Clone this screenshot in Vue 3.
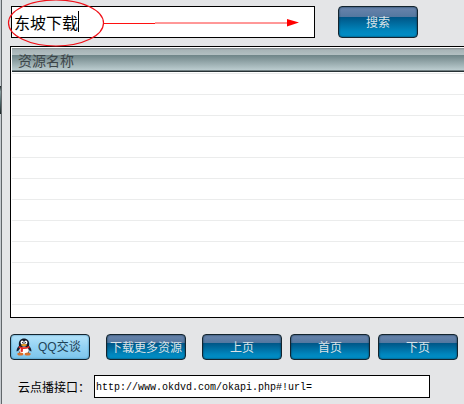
<script setup>
import { ref } from 'vue'

const keyword = ref('东坡下载')
const apiUrl = ref('http://www.okdvd.com/okapi.php#!url=')

const rows = 12
const pageButtons = ['上页', '首页', '下页']
</script>

<template>
  <div class="window">
    <div class="edge"><span class="edge-mark"></span></div>

    <div class="content">
      <!-- Search -->
      <form class="search-bar" @submit.prevent>
        <input v-model="keyword" class="search-input" type="text" aria-label="搜索" />
        <button class="btn btn-search" type="submit">搜索</button>
        <svg class="mark" width="310" height="50" viewBox="0 0 310 50" fill="none">
          <ellipse cx="56" cy="23" rx="47.5" ry="23" stroke="#f01018" stroke-width="1.2" />
          <path d="M104 23.5H155" stroke="#ff1010" stroke-width="1" />
          <path d="M155 23H290" stroke="#ff3030" stroke-width="1" />
          <path d="M287 19L299 22.5L287 26.5Z" fill="#f00" />
          <path d="M78.5 11V32" stroke="#000" stroke-width="1" />
        </svg>
      </form>

      <!-- Results -->
      <div class="list">
        <table class="list-table">
          <thead>
            <tr><th>资源名称</th></tr>
          </thead>
          <tbody>
            <tr v-for="n in rows" :key="n"><td></td></tr>
          </tbody>
        </table>
      </div>

      <!-- Actions -->
      <div class="actions">
        <button class="btn btn-qq" type="button">
          <svg class="penguin" width="16" height="18" viewBox="0 0 16 18">
            <path d="M3 8C1.5 9 .3 11.5 .6 13.5C1.5 13.5 2 12.5 2.5 12L3.5 15H12.5L13.5 12C14 12.5 14.5 13.5 15.4 13.5C15.7 11.5 14.5 9 13 8Z" fill="#172032" />
            <path d="M3 8C2 2.5 5 .5 8 .5S14 2.5 13 8L12 9H4Z" fill="#101624" />
            <ellipse cx="8" cy="12.5" rx="4.8" ry="4" fill="#fff" />
            <ellipse cx="6.2" cy="4.5" rx="1.6" ry="2" fill="#fff" />
            <ellipse cx="9.8" cy="4.5" rx="1.6" ry="2" fill="#fff" />
            <circle cx="6.7" cy="4.7" r=".6" fill="#000" />
            <circle cx="9.3" cy="4.7" r=".6" fill="#000" />
            <ellipse cx="8" cy="7" rx="3" ry="1" fill="#f5a623" />
            <path d="M3 8Q8 10.5 13 8L13.5 9.7Q10 11.3 7 11L6.7 14L4.5 13.7L4.8 10.5L2.6 9.7Z" fill="#e22a22" />
            <ellipse cx="4.4" cy="16" rx="3" ry="1.5" fill="#d9702a" />
            <ellipse cx="11.6" cy="16" rx="3" ry="1.5" fill="#d9702a" />
          </svg>
          <span>QQ交谈</span>
        </button>
        <button class="btn" type="button">下载更多资源</button>
        <div class="pager">
          <button v-for="label in pageButtons" :key="label" class="btn" type="button">{{ label }}</button>
        </div>
      </div>

      <!-- Play API -->
      <div class="api-bar">
        <label for="api-url">云点播接口：</label>
        <input id="api-url" v-model="apiUrl" class="api-input" type="text" />
      </div>
    </div>
  </div>
</template>

<style>
body {
  background: #e4e5e7;
}
</style>

<style scoped>
.window {
  display: flex;
  min-height: 100vh;
  overflow: hidden;
  background: #e4e5e7;
  color: #000;
  font-family: 'Liberation Sans', 'Noto Sans CJK SC', sans-serif;
  font-size: 12px;
}

.edge {
  box-sizing: border-box;
  width: 2px;
  padding-top: 86px;
  background: #c6cbd0;
  border-right: 1px solid #62676b;
}

.edge-mark {
  display: block;
  height: 28px;
  background: linear-gradient(#1c2426, #8a9c9f 20%, #4b6468 60%, #1c2426);
}

.content {
  flex: 1;
  min-width: 0;
  padding: 6px 0 6px 8px;
}

.search-bar {
  position: relative;
  display: flex;
  gap: 23px;
  padding: 0 46px 0 1px;
}

input {
  box-sizing: border-box;
  min-width: 0;
  margin: 0;
  background: #fff;
  border: 1px solid #000;
  border-radius: 0;
  color: #000;
  outline: none;
}

.search-input {
  flex: 1;
  height: 32px;
  padding: 0 2px;
  font-family: 'Liberation Sans', 'Noto Sans CJK SC', sans-serif;
  font-size: 16px;
}

/* hand-drawn hint over the search box */
.mark {
  position: absolute;
  top: -6px;
  left: -10px;
  pointer-events: none;
}

.btn {
  box-sizing: border-box;
  flex-shrink: 0;
  width: 80px;
  height: 26px;
  padding: 0;
  border: 1px solid #14242e;
  border-radius: 4px;
  background: linear-gradient(#6a84ac, #53779f 34%, #005788 35%, #0086bd 80%, #0090c8);
  box-shadow: inset 0 0 2px #062a40;
  color: #dce3e8;
  font-family: 'Liberation Sans', 'Noto Sans CJK SC', sans-serif;
  font-size: 12px;
  line-height: 26px;
  white-space: nowrap;
  cursor: pointer;
}

.btn-search {
  height: 32px;
  line-height: 32px;
}

.list {
  margin-top: 8px;
  padding: 1px 0 0 1px;
  background: #fff;
  border: 1px solid #000;
  border-right: none;
}

.list-table {
  width: 100%;
  border-spacing: 0;
}

.list-table th {
  box-sizing: border-box;
  height: 25px;
  padding: 2px 6px 0;
  background: linear-gradient(#858c8e, #a7b4b7 2px, #b3c0c2 7px, #6e8487 7px, #93a6a9 14px, #bbcccf 22px, #263134 23px) padding-box;
  border-bottom: 1px solid #fff;
  color: #3c4548;
  font-size: 14px;
  font-weight: 400;
  line-height: 22px;
  text-align: left;
}

.list-table td {
  box-sizing: border-box;
  height: 21px;
  padding: 0;
  border-top: 1px solid #ebecec;
}

.list-table tr:last-child td {
  height: 13px;
}

.actions {
  display: flex;
  gap: 16px;
  margin-top: 16px;
}

.pager {
  display: flex;
  gap: 8px;
}

.btn-qq {
  display: flex;
  align-items: center;
  gap: 6px;
  padding-left: 5px;
  background: linear-gradient(#b5e3fa, #93d2f3 50%, #7cc5ec);
  box-shadow: inset 0 0 2px #1f6f9c;
  color: #1f4358;
}

.penguin {
  flex-shrink: 0;
}

.api-bar {
  display: flex;
  align-items: center;
  gap: 4px;
  margin-top: 15px;
  padding: 0 34px 0 8px;
}

.api-bar label {
  flex-shrink: 0;
}

.api-input {
  flex: 1;
  height: 23px;
  padding: 2px 1px 0;
  font-family: 'Liberation Mono', monospace;
  font-size: 10px;
}
</style>
